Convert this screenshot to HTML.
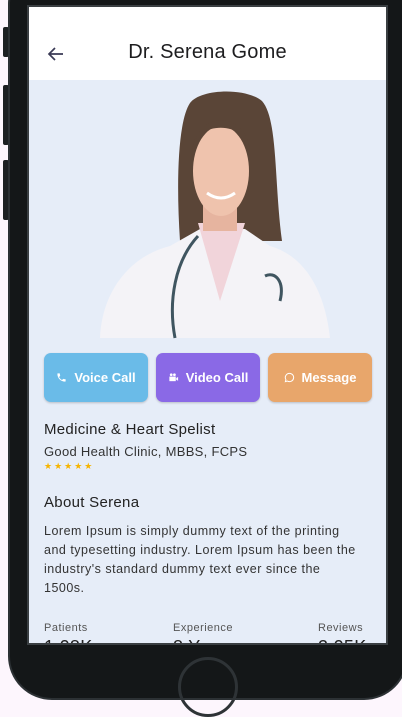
<!DOCTYPE html>
<html><head><meta charset="utf-8"><style>
*{margin:0;padding:0;box-sizing:border-box}
body{width:402px;height:702px;background:#fdf6fd;position:relative;overflow:hidden;font-family:"Liberation Sans",sans-serif}
.phone{position:absolute;left:8px;top:-40px;width:400px;height:740px;background:#141718;border-radius:44px;border:2px solid #2c3134}
.btn{position:absolute;left:3px;width:6px;background:#1c2022;border-radius:2px}
.screen{position:absolute;left:27px;top:5px;width:361px;height:640px;background:#e6edf8;border:2px solid #3a3f42;overflow:hidden}
.hdr{position:absolute;left:0;top:0;width:100%;height:73px;background:#fff}
.title{position:absolute;left:0;width:100%;top:34px;text-align:center;font-size:20px;color:#1d1d1f;letter-spacing:.2px}
.b{position:absolute;top:346px;width:104px;height:49px;border-radius:7px;color:#fff;font-size:13px;font-weight:bold;display:flex;align-items:center;justify-content:center;gap:7px;box-shadow:0 1px 2px rgba(0,0,0,.2)}
.t{position:absolute;left:15px;color:#222;letter-spacing:.3px}
.home{position:absolute;left:178px;top:657px;width:60px;height:60px;border-radius:50%;border:3px solid #2e3336}
</style></head><body>
<div class="btn" style="top:27px;height:30px"></div>
<div class="btn" style="top:85px;height:60px"></div>
<div class="btn" style="top:160px;height:60px"></div>
<div class="phone"></div>
<div class="home"></div>
<div class="screen">
<div class="hdr">
<svg style="position:absolute;left:18px;top:39px" width="18" height="16" viewBox="0 0 18 16"><path d="M16 8H2M8 2L2 8l6 6" fill="none" stroke="#3a3a55" stroke-width="1.7"/></svg>
<div class="title">Dr. Serena Gome</div>
</div>
<svg style="position:absolute;left:-29px;top:-6px" width="402" height="345" viewBox="0 0 402 345">
<path d="M180 240 C176 180 178 120 190 102 C200 88 245 86 262 100 C278 118 274 180 282 240 Z" fill="#5a4537"/>
<path d="M100 337 C102 290 130 255 170 245 L200 228 L245 228 L270 245 C305 255 325 290 330 337 Z" fill="#f4f3f7"/>
<path d="M198 222 L220 300 L245 222 Z" fill="#f1d4da"/>
<rect x="203" y="195" width="34" height="35" fill="#e6b49f"/>
<ellipse cx="221" cy="170" rx="28" ry="45" fill="#efc3ad"/>
<path d="M192 150 C196 110 246 108 250 150 C248 120 195 118 192 150Z" fill="#5a4537"/>
<path d="M207 192 Q221 202 235 192" stroke="#fff" stroke-width="3" fill="none"/>
<path d="M175 337 C168 300 175 260 198 235" stroke="#3f5560" stroke-width="3" fill="none"/>
<path d="M280 300 C285 280 275 270 265 275" stroke="#3f5560" stroke-width="3" fill="none"/>
</svg>
<div class="b" style="left:15px;background:#6abbe8"><svg width="11" height="11" viewBox="0 0 24 24"><path fill="#fff" d="M6.6 10.8c1.4 2.8 3.8 5.1 6.6 6.6l2.2-2.2c.3-.3.7-.4 1-.2 1.1.4 2.3.6 3.6.6.6 0 1 .4 1 1V20c0 .6-.4 1-1 1C10.6 21 3 13.4 3 4c0-.6.4-1 1-1h3.5c.6 0 1 .4 1 1 0 1.3.2 2.5.6 3.6.1.3 0 .7-.2 1z"/></svg>Voice Call</div>
<div class="b" style="left:127px;background:#8a69e6"><svg width="11" height="11" viewBox="0 0 24 24"><circle cx="7" cy="6" r="3" fill="#fff"/><circle cx="14" cy="6" r="3" fill="#fff"/><rect x="3" y="10" width="14" height="10" fill="#fff"/><path d="M18 13l4-2v8l-4-2z" fill="#fff"/></svg>Video Call</div>
<div class="b" style="left:239px;background:#e8a66b"><svg width="11" height="11" viewBox="0 0 24 24"><path d="M12 3a9 9 0 1 1-4.5 16.8L3 21l1.2-4.3A9 9 0 0 1 12 3z" fill="none" stroke="#fff" stroke-width="2.2"/></svg>Message</div>
<div class="t" style="top:414px;font-size:15px">Medicine &amp; Heart Spelist</div>
<div class="t" style="top:437px;font-size:13px;color:#333">Good Health Clinic, MBBS, FCPS</div>
<div class="t" style="top:454px;font-size:9px;color:#f6b400;letter-spacing:2px">★★★★★</div>
<div class="t" style="top:487px;font-size:15px">About Serena</div>
<div class="t" style="top:515px;font-size:12.5px;line-height:19px;width:316px;color:#333;letter-spacing:.5px">Lorem Ipsum is simply dummy text of the printing and typesetting industry. Lorem Ipsum has been the industry's standard dummy text ever since the 1500s.</div>
<div class="t" style="top:615px;font-size:11px;color:#555;letter-spacing:.5px">Patients</div>
<div class="t" style="left:144px;top:615px;font-size:11px;color:#555;letter-spacing:.5px">Experience</div>
<div class="t" style="left:289px;top:615px;font-size:11px;color:#555;letter-spacing:.5px">Reviews</div>
<div class="t" style="top:630px;font-size:18px">1.08K</div>
<div class="t" style="left:144px;top:630px;font-size:18px">8 Y</div>
<div class="t" style="left:289px;top:630px;font-size:18px">2.05K</div>
</div>
</body></html>
